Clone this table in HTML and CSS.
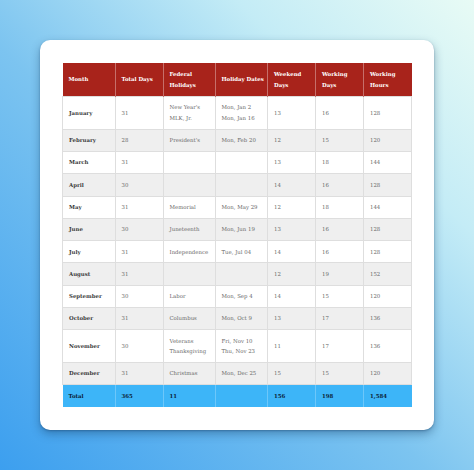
FILE: index.html
```html
<!DOCTYPE html>
<html>
<head>
<meta charset="utf-8">
<link rel="stylesheet" href="styles.css">
</head>
<body>
<div class="card">
<table class="cal">
<colgroup>
<col class="c1"><col class="c2"><col class="c3"><col class="c4"><col class="c5"><col class="c6"><col class="c7">
</colgroup>
<thead>
<tr><th>Month</th><th>Total Days</th><th>Federal<br>Holidays</th><th class="nw">Holiday Dates</th><th>Weekend<br>Days</th><th>Working<br>Days</th><th>Working<br>Hours</th></tr>
</thead>
<tbody>
<tr><td class="m">January</td><td>31</td><td>New Year's<br>MLK, Jr.</td><td>Mon, Jan 2<br>Mon, Jan 16</td><td>13</td><td>16</td><td>128</td></tr>
<tr><td class="m">February</td><td>28</td><td>President's</td><td>Mon, Feb 20</td><td>12</td><td>15</td><td>120</td></tr>
<tr><td class="m">March</td><td>31</td><td></td><td></td><td>13</td><td>18</td><td>144</td></tr>
<tr><td class="m">April</td><td>30</td><td></td><td></td><td>14</td><td>16</td><td>128</td></tr>
<tr><td class="m">May</td><td>31</td><td>Memorial</td><td>Mon, May 29</td><td>12</td><td>18</td><td>144</td></tr>
<tr><td class="m">June</td><td>30</td><td>Juneteenth</td><td>Mon, Jun 19</td><td>13</td><td>16</td><td>128</td></tr>
<tr><td class="m">July</td><td>31</td><td>Independence</td><td>Tue, Jul 04</td><td>14</td><td>16</td><td>128</td></tr>
<tr><td class="m">August</td><td>31</td><td></td><td></td><td>12</td><td>19</td><td>152</td></tr>
<tr><td class="m">September</td><td>30</td><td>Labor</td><td>Mon, Sep 4</td><td>14</td><td>15</td><td>120</td></tr>
<tr><td class="m">October</td><td>31</td><td>Columbus</td><td>Mon, Oct 9</td><td>13</td><td>17</td><td>136</td></tr>
<tr><td class="m">November</td><td>30</td><td>Veterans<br>Thanksgiving</td><td>Fri, Nov 10<br>Thu, Nov 23</td><td>11</td><td>17</td><td>136</td></tr>
<tr><td class="m">December</td><td>31</td><td>Christmas</td><td>Mon, Dec 25</td><td>15</td><td>15</td><td>120</td></tr>
</tbody>
<tfoot>
<tr><td>Total</td><td>365</td><td>11</td><td></td><td>156</td><td>198</td><td>1,584</td></tr>
</tfoot>
</table>
</div>
</body>
</html>
```
FILE: styles.css
```css
html, body {
  margin: 0;
  padding: 0;
}
body {
  width: 474px;
  height: 470px;
  overflow: hidden;
  background: linear-gradient(to top right, #3c9fef 0%, #7cc4f0 45%, #c4ecf6 75%, #e8fbf5 100%);
  padding: 40px;
  box-sizing: border-box;
  font-family: "DejaVu Serif", serif;
}
.card {
  width: 394px;
  height: 390px;
  box-sizing: border-box;
  background: #fff;
  border-radius: 10px;
  padding: 23px 23px 0 22px;
  box-shadow: 0 4px 10px rgba(20, 60, 100, 0.4), 0 1px 2px rgba(20, 60, 100, 0.35);
}
.cal {
  width: 349px;
  border-collapse: collapse;
  table-layout: fixed;
  font-size: 5.4px;
  line-height: 10.5px;
}
.c1 { width: 52.5px; }
.c2 { width: 48px; }
.c3 { width: 52px; }
.c4 { width: 52.5px; }
.c5 { width: 48px; }
.c6 { width: 48px; }
.c7 { width: 48px; }
.cal th {
  background: #a8231b;
  color: #fff;
  font-weight: bold;
  text-align: left;
  padding: 6px 2px 6px 6px;
  border-left: 1px solid rgba(255, 255, 255, 0.35);
  height: 21px;
}
.cal th.nw { white-space: nowrap; }
.cal th:first-child { border-left: 0; }
.cal td {
  color: #6a6a6a;
  text-align: left;
  padding: 5.4px 6px;
  border: 1px solid #dedede;
  vertical-align: middle;
}
.cal tbody tr:nth-child(even) td {
  background: #efefef;
}
.cal td.m {
  color: #3c3c3c;
  font-weight: bold;
}
.cal tfoot td {
  background: #3db5f8;
  color: #0b2236;
  font-weight: bold;
  border: 0;
  border-left: 1px solid rgba(255, 255, 255, 0.25);
}
.cal tfoot td:first-child { border-left: 0; }
```
